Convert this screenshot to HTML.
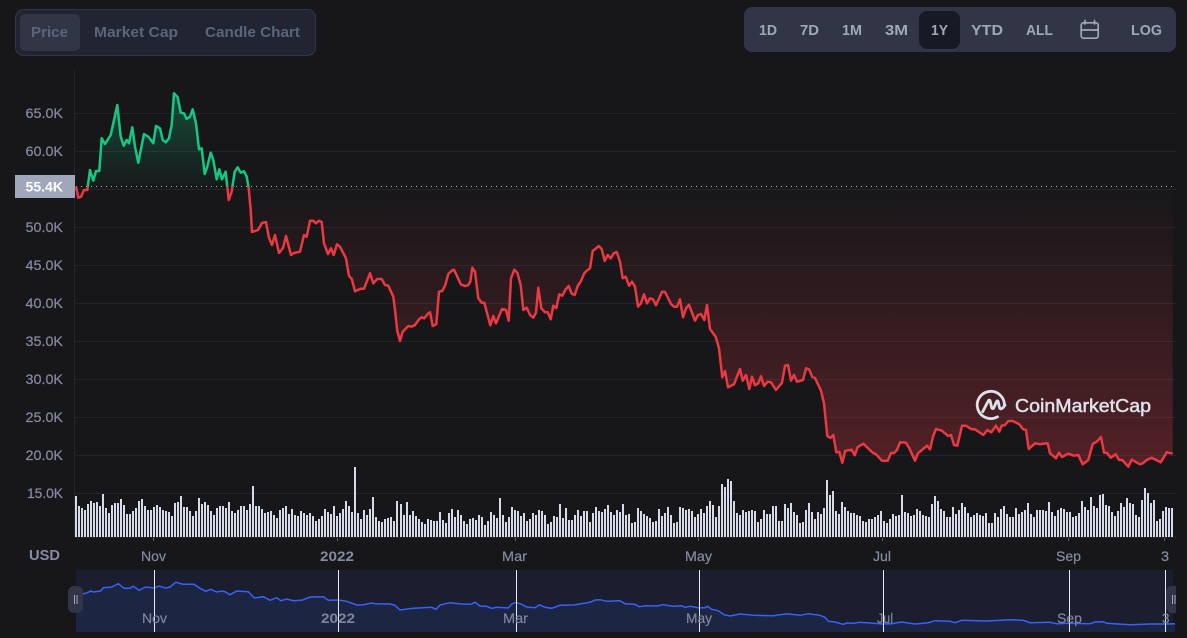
<!DOCTYPE html>
<html><head><meta charset="utf-8"><title>Chart</title>
<style>
html,body{margin:0;padding:0;background:#17171a;width:1187px;height:638px;overflow:hidden}
svg{display:block}
text{font-family:"Liberation Sans",sans-serif}
.t{font-size:15px;font-weight:700;fill:#58667e}
.b{font-size:15px;font-weight:700;fill:#a1a7bb}
.y{font-size:14px;fill:#858ca2;stroke:#858ca2;stroke-width:.2}
.x{font-size:14px;fill:#858ca2;stroke:#858ca2;stroke-width:.2}
.xb{font-size:14px;font-weight:700;fill:#858ca2}
.n{font-size:14px;fill:#7f869c;stroke:#7f869c;stroke-width:.2}
.nb{font-size:14px;font-weight:700;fill:#7f869c}
</style></head><body>
<svg width="1187" height="638" viewBox="0 0 1187 638" xmlns="http://www.w3.org/2000/svg">
<defs>
<linearGradient id="rg" gradientUnits="userSpaceOnUse" x1="0" y1="187" x2="0" y2="460"><stop offset="0" stop-color="#ea3943" stop-opacity="0"/><stop offset="1" stop-color="#ea3943" stop-opacity=".28"/></linearGradient>
<linearGradient id="gg" gradientUnits="userSpaceOnUse" x1="0" y1="93" x2="0" y2="187"><stop offset="0" stop-color="#16c784" stop-opacity=".3"/><stop offset="1" stop-color="#16c784" stop-opacity=".02"/></linearGradient>
<clipPath id="up"><rect x="70" y="60" width="1110" height="126.5"/></clipPath>
<clipPath id="dn"><rect x="70" y="186.5" width="1110" height="300"/></clipPath>
<clipPath id="navc"><rect x="60" y="570" width="1116" height="68"/></clipPath>
<path id="ln" d="M76 186.7L78.3 197.7 81 196.7 84 190 87.3 190 90 170 93.3 180.7 96 171 99.3 171 101.7 138.3 105 144 110.7 135 117.3 105 120.7 136.7 123.7 145.7 126.7 140 129 143.3 132.3 127.3 135 146.7 138.3 162.7 144 134 148.3 136.7 153.3 143.3 156 126 160 128.3 162.7 140 165.7 142.3 169 138.3 171.7 125 174 93.3 177.7 97.3 180.7 112.7 184 113.3 186.7 119 190 116.7 192.7 109.3 196 123.3 199 149.3 201.7 148.3 204.7 174 207.3 166.7 210.7 152.7 213.3 160 216.7 179.3 219.3 169.3 222 179.3 225.7 171.7 228.7 200 231.7 191.7 234.7 171.7 237.7 167.3 240.7 172.7 244 171.3 246.7 176.7 248.7 188.3 250.7 210 252 232 258 230 262 223 266 222 269 238 272 245 275 235 279 253 283 248 286 236 291 255 294 253 300 251.7 304 235 306.7 236.7 310 220.7 313.3 220.7 316 223.3 319 220.7 321.7 222 324 243.3 328 254 331 248.3 333.7 255 337 244.3 340 246.7 346 258.3 349 276 351.7 278.7 355 291.3 360.7 288.7 364 288.7 370 273.3 373.3 283.3 377.3 279 381.7 279 385 285 388.3 285.7 393.3 296.7 395 310 397.3 331 400 341 402.7 331.7 408.3 326 411.7 326.7 415 325 419.3 319 421.7 317.3 424.3 318.3 428.3 313.3 430 312.3 432.7 326 436.3 324.3 439 291.7 442.3 291 445.3 285 448.3 274 451.7 270.7 454 269.7 457.3 276.7 460.7 284.3 465 286 468.3 285 470.3 281.7 472.3 267.7 475 271.7 478.3 298.3 481.7 302.7 484.3 302.7 490.3 325.3 493.3 316 496 323.3 502 309 506 310 508.7 320.7 511 278.3 514.3 269.7 517.3 272.7 520.7 285 523.3 310 526.7 307.7 530 315 533.3 317.7 536 312.7 538.3 287.7 541.3 308.3 545 312.3 547.7 312.3 550.7 319.3 553.3 305.7 556.3 308 559.3 294.3 562.3 295.7 565.7 289.3 568.7 286 571.7 293.7 574.7 295 577.7 286 581 281 584.3 273.3 586.7 270.7 590 268.3 592.7 251 596 248.3 598.7 246 601.7 249 604.7 261 607.7 255 610.7 258.3 613.7 253.3 616.7 252 620 261.7 622.7 278.3 625.7 276.7 629 285.7 632 281.7 635 286.7 638 306.7 641 303.3 644 294.3 647 303.3 650 298.3 653 299.3 656 305.3 662 291.7 665 292 671 304 674 306.7 677 306.7 680 299.3 683 317.3 686 308.3 689 304.7 695 320.7 698 315 701 314 704.3 320 707 305 710 329 715.7 336.7 719 348.3 722.3 377.3 725 371 728 387.3 734 384.3 740 369 742.7 380.7 746 375 749.3 389 752 376.7 755 385.3 758.3 383.3 761 376.3 764 386 767.7 381.7 771 382.3 776 390 782 382.7 785 365.7 788 365 791 380.7 794 375 797 381.7 803 380 806 368.3 809.3 369.7 812.3 377 815 378 821 390.7 824 403.3 827.3 436 830.3 438 833.3 435 836.3 452.3 839.3 452 842.3 462.7 845.3 450.7 851.7 449.7 854.7 455.3 857.7 447 863.3 443.7 872.7 452.7 876 454.3 882 460.7 887.7 460.7 891 453 894 453 897 450 900 442.3 906 442.7 909.3 448.3 915 460.7 918 453.3 927 445.7 930 449.3 933 436.7 936 429 942 430.7 948 436 951 435 954 445 957.3 445.7 962 425.7 966 425.7 971.7 429.3 975 429.3 983.3 435 987.3 430 991.3 432.3 996 425.7 999.3 431.7 1001.7 425.7 1005 425 1008.3 421 1012.7 421 1019.3 424.3 1023.3 429.3 1026 430 1028.7 449 1035 443.3 1040 444.3 1047.7 443.3 1050 453.3 1056 458.3 1059 452.7 1062 457 1068.3 453.7 1074 455.7 1078.3 455 1082.7 464.3 1088.3 460 1092.7 444 1096.7 441.7 1101 437 1104 452.7 1106.7 452.7 1110.7 457.7 1115.7 454.3 1119 460 1122.3 460 1128.3 466.7 1131.7 459.7 1140 464.3 1142.7 463.3 1146.7 460 1151.7 457.7 1160.7 462.3 1166.7 452.3 1172.7 453.7"/>
<path id="ar" d="M76 186.7L78.3 197.7 81 196.7 84 190 87.3 190 90 170 93.3 180.7 96 171 99.3 171 101.7 138.3 105 144 110.7 135 117.3 105 120.7 136.7 123.7 145.7 126.7 140 129 143.3 132.3 127.3 135 146.7 138.3 162.7 144 134 148.3 136.7 153.3 143.3 156 126 160 128.3 162.7 140 165.7 142.3 169 138.3 171.7 125 174 93.3 177.7 97.3 180.7 112.7 184 113.3 186.7 119 190 116.7 192.7 109.3 196 123.3 199 149.3 201.7 148.3 204.7 174 207.3 166.7 210.7 152.7 213.3 160 216.7 179.3 219.3 169.3 222 179.3 225.7 171.7 228.7 200 231.7 191.7 234.7 171.7 237.7 167.3 240.7 172.7 244 171.3 246.7 176.7 248.7 188.3 250.7 210 252 232 258 230 262 223 266 222 269 238 272 245 275 235 279 253 283 248 286 236 291 255 294 253 300 251.7 304 235 306.7 236.7 310 220.7 313.3 220.7 316 223.3 319 220.7 321.7 222 324 243.3 328 254 331 248.3 333.7 255 337 244.3 340 246.7 346 258.3 349 276 351.7 278.7 355 291.3 360.7 288.7 364 288.7 370 273.3 373.3 283.3 377.3 279 381.7 279 385 285 388.3 285.7 393.3 296.7 395 310 397.3 331 400 341 402.7 331.7 408.3 326 411.7 326.7 415 325 419.3 319 421.7 317.3 424.3 318.3 428.3 313.3 430 312.3 432.7 326 436.3 324.3 439 291.7 442.3 291 445.3 285 448.3 274 451.7 270.7 454 269.7 457.3 276.7 460.7 284.3 465 286 468.3 285 470.3 281.7 472.3 267.7 475 271.7 478.3 298.3 481.7 302.7 484.3 302.7 490.3 325.3 493.3 316 496 323.3 502 309 506 310 508.7 320.7 511 278.3 514.3 269.7 517.3 272.7 520.7 285 523.3 310 526.7 307.7 530 315 533.3 317.7 536 312.7 538.3 287.7 541.3 308.3 545 312.3 547.7 312.3 550.7 319.3 553.3 305.7 556.3 308 559.3 294.3 562.3 295.7 565.7 289.3 568.7 286 571.7 293.7 574.7 295 577.7 286 581 281 584.3 273.3 586.7 270.7 590 268.3 592.7 251 596 248.3 598.7 246 601.7 249 604.7 261 607.7 255 610.7 258.3 613.7 253.3 616.7 252 620 261.7 622.7 278.3 625.7 276.7 629 285.7 632 281.7 635 286.7 638 306.7 641 303.3 644 294.3 647 303.3 650 298.3 653 299.3 656 305.3 662 291.7 665 292 671 304 674 306.7 677 306.7 680 299.3 683 317.3 686 308.3 689 304.7 695 320.7 698 315 701 314 704.3 320 707 305 710 329 715.7 336.7 719 348.3 722.3 377.3 725 371 728 387.3 734 384.3 740 369 742.7 380.7 746 375 749.3 389 752 376.7 755 385.3 758.3 383.3 761 376.3 764 386 767.7 381.7 771 382.3 776 390 782 382.7 785 365.7 788 365 791 380.7 794 375 797 381.7 803 380 806 368.3 809.3 369.7 812.3 377 815 378 821 390.7 824 403.3 827.3 436 830.3 438 833.3 435 836.3 452.3 839.3 452 842.3 462.7 845.3 450.7 851.7 449.7 854.7 455.3 857.7 447 863.3 443.7 872.7 452.7 876 454.3 882 460.7 887.7 460.7 891 453 894 453 897 450 900 442.3 906 442.7 909.3 448.3 915 460.7 918 453.3 927 445.7 930 449.3 933 436.7 936 429 942 430.7 948 436 951 435 954 445 957.3 445.7 962 425.7 966 425.7 971.7 429.3 975 429.3 983.3 435 987.3 430 991.3 432.3 996 425.7 999.3 431.7 1001.7 425.7 1005 425 1008.3 421 1012.7 421 1019.3 424.3 1023.3 429.3 1026 430 1028.7 449 1035 443.3 1040 444.3 1047.7 443.3 1050 453.3 1056 458.3 1059 452.7 1062 457 1068.3 453.7 1074 455.7 1078.3 455 1082.7 464.3 1088.3 460 1092.7 444 1096.7 441.7 1101 437 1104 452.7 1106.7 452.7 1110.7 457.7 1115.7 454.3 1119 460 1122.3 460 1128.3 466.7 1131.7 459.7 1140 464.3 1142.7 463.3 1146.7 460 1151.7 457.7 1160.7 462.3 1166.7 452.3 1172.7 453.7V186.5H76Z"/>
</defs>

<!-- tabs -->
<rect x="15.5" y="9.5" width="300" height="46" rx="8" fill="#222531" stroke="#323546"/>
<rect x="20" y="14" width="60" height="37" rx="6" fill="#323546"/>
<text class="t" x="31" y="37" textLength="37" lengthAdjust="spacingAndGlyphs">Price</text>
<text class="t" x="94" y="37" textLength="84" lengthAdjust="spacingAndGlyphs">Market Cap</text>
<text class="t" x="205" y="37" textLength="95" lengthAdjust="spacingAndGlyphs">Candle Chart</text>

<!-- range bar -->
<rect x="744" y="7" width="432" height="45" rx="8" fill="#323546"/>
<rect x="919" y="11" width="41" height="38" rx="8" fill="#171924"/>
<text class="b" x="759" y="35" textLength="18" lengthAdjust="spacingAndGlyphs">1D</text>
<text class="b" x="800" y="35" textLength="19" lengthAdjust="spacingAndGlyphs">7D</text>
<text class="b" x="842" y="35" textLength="20" lengthAdjust="spacingAndGlyphs">1M</text>
<text class="b" x="885" y="35" textLength="23" lengthAdjust="spacingAndGlyphs">3M</text>
<text class="b" x="931" y="35" textLength="17" lengthAdjust="spacingAndGlyphs">1Y</text>
<text class="b" x="971" y="35" textLength="32" lengthAdjust="spacingAndGlyphs">YTD</text>
<text class="b" x="1026" y="35" textLength="27" lengthAdjust="spacingAndGlyphs">ALL</text>
<text class="b" x="1131" y="35" textLength="31" lengthAdjust="spacingAndGlyphs">LOG</text>
<g fill="none" stroke="#a1a7bb" stroke-width="1.7" stroke-linecap="round"><rect x="1081.2" y="22.8" width="17" height="15.4" rx="2.5"/><path d="M1081.2 30H1098.2M1085 20.5V24M1094.5 20.5V24"/></g>

<!-- grid -->
<g stroke="#222531" stroke-width="1" fill="none">
<path d="M74.5 70V537.5M75 113.5H1176M75 151.5H1176M75 227.5H1176M75 265.5H1176M75 303.5H1176M75 341.5H1176M75 379.5H1176M75 417.5H1176M75 455.5H1176M75 493.5H1176M75 189.5H1176M75 537.5H1176"/>
</g>
<!-- y labels -->
<text class="y" x="25.5" y="118" textLength="37.5" lengthAdjust="spacingAndGlyphs">65.0K</text>
<text class="y" x="25.5" y="156" textLength="37.5" lengthAdjust="spacingAndGlyphs">60.0K</text>
<text class="y" x="25.5" y="232" textLength="37.5" lengthAdjust="spacingAndGlyphs">50.0K</text>
<text class="y" x="25.5" y="270" textLength="37.5" lengthAdjust="spacingAndGlyphs">45.0K</text>
<text class="y" x="25.5" y="308" textLength="37.5" lengthAdjust="spacingAndGlyphs">40.0K</text>
<text class="y" x="25.5" y="346" textLength="37.5" lengthAdjust="spacingAndGlyphs">35.0K</text>
<text class="y" x="25.5" y="384" textLength="37.5" lengthAdjust="spacingAndGlyphs">30.0K</text>
<text class="y" x="25.5" y="422" textLength="37.5" lengthAdjust="spacingAndGlyphs">25.0K</text>
<text class="y" x="25.5" y="460" textLength="37.5" lengthAdjust="spacingAndGlyphs">20.0K</text>
<text class="y" x="27" y="498" textLength="36" lengthAdjust="spacingAndGlyphs">15.0K</text>
<rect x="15" y="175" width="60" height="23" fill="#a1a7bb"/>
<text x="25.5" y="191.5" font-size="14" font-weight="700" fill="#fff" textLength="37.5" lengthAdjust="spacingAndGlyphs">55.4K</text>

<!-- areas + line -->
<use href="#ar" fill="url(#rg)" clip-path="url(#dn)"/>
<use href="#ar" fill="url(#gg)" clip-path="url(#up)"/>
<path d="M76 186.5H1176" stroke="#cfd3dc" stroke-width="1" stroke-dasharray="1 4" fill="none" opacity=".85"/>
<use href="#ln" fill="none" stroke="#ea3943" stroke-width="2.5" stroke-linejoin="round" clip-path="url(#dn)"/>
<use href="#ln" fill="none" stroke="#16c784" stroke-width="2.5" stroke-linejoin="round" clip-path="url(#up)"/>

<!-- volume -->
<g shape-rendering="crispEdges">
<path fill="none" stroke="#d5dbe8" stroke-width="2" d="M76 537v-41m3 41v-31m3 31v-29m3 29v-27m3 27v-33m3 33v-36m3 36v-34m3 34v-35m3 35v-31m3 31v-43m3 43v-29m3 29v-24m3 24v-32m3 32v-34m3 34v-34m3 34v-38m3 38v-32m3 32v-23m3 23v-23m3 23v-26m3 26v-29m3 29v-36m3 36v-38m3 38v-31m3 31v-27m3 27v-27m3 27v-30m3 30v-32m3 32v-30m3 30v-27m3 27v-26m3 26v-25m3 25v-21m3 21v-34m3 34v-35m3 35v-41m3 41v-30m3 30v-30m3 30v-26m3 26v-21m3 21v-26m3 26v-39m3 39v-33m3 33v-35m3 35v-32m3 32v-26m3 26v-22m3 22v-29m3 29v-31m3 31v-31m3 31v-29m3 29v-35m3 35v-26m3 26v-24m3 24v-27m3 27v-31m3 31v-31m3 31v-27m3 27v-33m3 33v-51m3 51v-31m3 31v-31m3 31v-28m3 28v-24m3 24v-25m3 25v-26m3 26v-22m3 22v-19m3 19v-27m3 27v-29m3 29v-31m3 31v-23m3 23v-28m3 28v-22m3 22v-21m3 21v-26m3 26v-24m3 24v-22m3 22v-24m3 24v-21m3 21v-16m3 16v-18m3 18v-21m3 21v-28m3 28v-25m3 25v-23m3 23v-31m3 31v-21m3 21v-24m3 24v-28m3 28v-36m3 36v-31m3 31v-25m3 25v-70m3 70v-24m3 24v-18m3 18v-27m3 27v-22m3 22v-28m3 28v-40m3 40v-20m3 20v-16m3 16v-15m3 15v-18m3 18v-19m3 19v-20m3 20v-16m3 16v-36"/>
<path fill="none" stroke="#d5dbe8" stroke-width="2" d="M401 537v-33m3 33v-22m3 22v-35m3 35v-22m3 22v-26m3 26v-21m3 21v-18m3 18v-15m3 15v-13m3 13v-18m3 18v-17m3 17v-16m3 16v-16m3 16v-25m3 25v-17m3 17v-14m3 14v-24m3 24v-28m3 28v-20m3 20v-27m3 27v-22m3 22v-16m3 16v-13m3 13v-18m3 18v-19m3 19v-17m3 17v-22m3 22v-20m3 20v-12m3 12v-16m3 16v-25m3 25v-22m3 22v-19m3 19v-39m3 39v-22m3 22v-15m3 15v-20m3 20v-30m3 30v-27m3 27v-26m3 26v-21m3 21v-24m3 24v-16m3 16v-18m3 18v-24m3 24v-22m3 22v-27m3 27v-26m3 26v-22m3 22v-13m3 13v-15m3 15v-21m3 21v-20m3 20v-33m3 33v-19m3 19v-29m3 29v-17m3 17v-17m3 17v-22m3 22v-27m3 27v-21m3 21v-26m3 26v-26m3 26v-15m3 15v-24m3 24v-30m3 30v-26m3 26v-25m3 25v-28m3 28v-32m3 32v-25m3 25v-22m3 22v-27m3 27v-25m3 25v-33m3 33v-22m3 22v-23m3 23v-14m3 14v-15m3 15v-29m3 29v-26m3 26v-23m3 23v-21m3 21v-19m3 19v-15m3 15v-16m3 16v-28m3 28v-21m3 21v-24m3 24v-30m3 30v-22m3 22v-14m3 14v-15m3 15v-30m3 30v-29m3 29v-27m3 27v-28m3 28v-26m3 26v-20m3 20v-23m3 23v-28m3 28v-24m3 24v-31m3 31v-36m3 36v-32m3 32v-20m3 20v-31m3 31v-53m3 53v-50m3 50v-58m3 58v-56m3 56v-36m3 36v-24m3 24v-22m3 22v-27m3 27v-25m3 25v-26m3 26v-27m3 27v-26m3 26v-15m3 15v-18m3 18v-27m3 27v-23m3 23v-23m3 23v-31m3 31v-31m3 31v-16m3 16v-16m3 16v-33m3 33v-29m3 29v-34m3 34v-25m3 25v-22m3 22v-14"/>
<path fill="none" stroke="#d5dbe8" stroke-width="2" d="M803 537v-15m3 15v-27m3 27v-34m3 34v-25m3 25v-18m3 18v-25m3 25v-23m3 23v-29m3 29v-57m3 57v-42m3 42v-46m3 46v-26m3 26v-23m3 23v-35m3 35v-30m3 30v-26m3 26v-24m3 24v-24m3 24v-22m3 22v-21m3 21v-16m3 16v-15m3 15v-18m3 18v-18m3 18v-20m3 20v-22m3 22v-26m3 26v-16m3 16v-14m3 14v-18m3 18v-23m3 23v-21m3 21v-22m3 22v-42m3 42v-25m3 25v-24m3 24v-21m3 21v-22m3 22v-28m3 28v-26m3 26v-22m3 22v-21m3 21v-20m3 20v-33m3 33v-41m3 41v-36m3 36v-28m3 28v-26m3 26v-20m3 20v-20m3 20v-30m3 30v-23m3 23v-27m3 27v-34m3 34v-30m3 30v-24m3 24v-20m3 20v-22m3 22v-24m3 24v-22m3 22v-21m3 21v-24m3 24v-14m3 14v-14m3 14v-24m3 24v-20m3 20v-28m3 28v-31m3 31v-23m3 23v-20m3 20v-20m3 20v-29m3 29v-23m3 23v-25m3 25v-27m3 27v-34m3 34v-23m3 23v-20m3 20v-27m3 27v-27m3 27v-27m3 27v-26m3 26v-35m3 35v-25m3 25v-21m3 21v-27m3 27v-29m3 29v-28m3 28v-25m3 25v-25m3 25v-20m3 20v-21m3 21v-24m3 24v-36m3 36v-30m3 30v-27m3 27v-40m3 40v-31m3 31v-29m3 29v-42m3 42v-43m3 43v-32m3 32v-31m3 31v-25m3 25v-21m3 21v-26m3 26v-34m3 34v-30m3 30v-39m3 39v-34m3 34v-33m3 33v-22m3 22v-20m3 20v-37m3 37v-49m3 49v-44m3 44v-34m3 34v-37m3 37v-16m3 16v-18m3 18v-26m3 26v-30m3 30v-29m3 29v-29"/>
</g>
<path d="M153.5 538v3M337.5 538v3M515.5 538v3M698.5 538v3M882.5 538v3M1068.5 538v3M1164.5 538v3" stroke="#555a68" stroke-width="1"/>

<!-- logo -->
<g fill="none" stroke="#dde1ea" stroke-width="2.8" stroke-linecap="round" stroke-linejoin="round">
<path d="M1004.4 405A13.6 13.6 0 1 0 997.5 416.8"/>
<path d="M982.7 411.7L988.3 400.9C989 399.5 990 400 990.3 401.5L991.6 407.5C992 409 993.4 409 994 407.5L996.3 402C997 400.4 998 400.6 998.3 402L999.5 407.5C1000 409.5 1002 409.8 1005 405"/>
</g>
<text x="1015" y="412" font-size="18.5" fill="#dde1ea" stroke="#dde1ea" stroke-width=".5" textLength="136" lengthAdjust="spacingAndGlyphs">CoinMarketCap</text>

<!-- x labels -->
<text x="29" y="560" font-size="14.5" font-weight="700" fill="#858ca2" textLength="31" lengthAdjust="spacingAndGlyphs">USD</text>
<text class="x" x="141" y="561" textLength="25" lengthAdjust="spacingAndGlyphs">Nov</text>
<text class="xb" x="320" y="561" textLength="34" lengthAdjust="spacingAndGlyphs">2022</text>
<text class="x" x="502" y="561" textLength="25" lengthAdjust="spacingAndGlyphs">Mar</text>
<text class="x" x="685" y="561" textLength="27" lengthAdjust="spacingAndGlyphs">May</text>
<text class="x" x="873" y="561" textLength="18" lengthAdjust="spacingAndGlyphs">Jul</text>
<text class="x" x="1056" y="561" textLength="25" lengthAdjust="spacingAndGlyphs">Sep</text>
<text class="x" x="1161" y="561" textLength="8" lengthAdjust="spacingAndGlyphs">3</text>

<!-- navigator -->
<rect x="76" y="570" width="1097" height="62" fill="#1a1e2e"/>
<path fill="#1c2643" d="M76 594L83 594 87.3 592.7 90.7 591 93.3 592 100.7 591 103.3 587.7 111.7 587 118.3 583.7 124 588.3 130 588.3 133.3 586.3 139 590.3 145.7 587 154 588 159 586 165.7 588 170 587 175.7 582.3 183.3 584.3 194 584.3 200 588.3 205.7 591.3 210.7 589.3 216.7 592 221.7 591 225 591.7 230 594.7 236.7 591 248.3 591.7 254.3 598 263.3 596.7 270 600.3 276.7 597.7 280.7 600.7 286.7 599 293.3 600.7 301.7 600.3 310 597 323.3 596.7 328.3 600.3 338.3 600 346.7 601.3 356.7 605 363.3 604.7 371.7 603 375 603.7 390 604 395 605.3 400 610 413.3 608.3 431.7 607.3 436 609.3 440 605 450 602.7 461.7 604 470.7 604.3 475 602.3 480 606 486.7 606.3 491.7 608.3 496.7 607.3 508.3 608 511.7 604 516 602.3 521.7 604.3 526.7 607 535 607.7 539.3 604.7 545 607.3 551.7 608.3 560 605.3 573.3 605 590 602.3 595 600 600 599.7 606.7 601.3 620 600.7 625 603.7 635 604.3 639.3 606.7 645 605.7 656.7 606 663.3 604.7 673.3 606.3 681.7 605.7 685 607.3 690 606.3 698.3 607.7 705 607.7 707.7 606.3 711.7 609.3 718.3 610.7 724 614.7 730 616 740 614 753.3 615.3 773.3 615.7 786.7 613.7 800 615.3 808.3 613.7 820 615.3 825 617.3 828.3 621.3 835 622 843.3 624.3 846.7 623 853.3 623.3 860 622.3 866.7 622.7 883.3 624 891.7 623.7 901.7 622 915 624 928.3 622.7 935 620.7 950 621.3 955 622.7 961.7 620.3 986.7 621 1010 619.7 1023.3 620.3 1030 622.7 1050 622.3 1056.7 623.7 1069.3 623.3 1090 623.7 1095 622 1103.3 621.7 1106.7 623.3 1130 624.7 1150 624 1166.7 624 1175 623.7V632H76Z"/>
<path fill="none" stroke="#3861fb" stroke-width="1.5" d="M83 594L87.3 592.7 90.7 591 93.3 592 100.7 591 103.3 587.7 111.7 587 118.3 583.7 124 588.3 130 588.3 133.3 586.3 139 590.3 145.7 587 154 588 159 586 165.7 588 170 587 175.7 582.3 183.3 584.3 194 584.3 200 588.3 205.7 591.3 210.7 589.3 216.7 592 221.7 591 225 591.7 230 594.7 236.7 591 248.3 591.7 254.3 598 263.3 596.7 270 600.3 276.7 597.7 280.7 600.7 286.7 599 293.3 600.7 301.7 600.3 310 597 323.3 596.7 328.3 600.3 338.3 600 346.7 601.3 356.7 605 363.3 604.7 371.7 603 375 603.7 390 604 395 605.3 400 610 413.3 608.3 431.7 607.3 436 609.3 440 605 450 602.7 461.7 604 470.7 604.3 475 602.3 480 606 486.7 606.3 491.7 608.3 496.7 607.3 508.3 608 511.7 604 516 602.3 521.7 604.3 526.7 607 535 607.7 539.3 604.7 545 607.3 551.7 608.3 560 605.3 573.3 605 590 602.3 595 600 600 599.7 606.7 601.3 620 600.7 625 603.7 635 604.3 639.3 606.7 645 605.7 656.7 606 663.3 604.7 673.3 606.3 681.7 605.7 685 607.3 690 606.3 698.3 607.7 705 607.7 707.7 606.3 711.7 609.3 718.3 610.7 724 614.7 730 616 740 614 753.3 615.3 773.3 615.7 786.7 613.7 800 615.3 808.3 613.7 820 615.3 825 617.3 828.3 621.3 835 622 843.3 624.3 846.7 623 853.3 623.3 860 622.3 866.7 622.7 883.3 624 891.7 623.7 901.7 622 915 624 928.3 622.7 935 620.7 950 621.3 955 622.7 961.7 620.3 986.7 621 1010 619.7 1023.3 620.3 1030 622.7 1050 622.3 1056.7 623.7 1069.3 623.3 1090 623.7 1095 622 1103.3 621.7 1106.7 623.3 1130 624.7 1150 624 1166.7 624 1175 623.7"/>
<path d="M154.5 570V632M338.5 570V632M516.5 570V632M699.5 570V632M883.5 570V632M1069.5 570V632M1165.5 570V632" stroke="#e8ebf2" stroke-width="1"/>
<text class="n" x="142" y="623" textLength="25" lengthAdjust="spacingAndGlyphs">Nov</text>
<text class="nb" x="321" y="623" textLength="34" lengthAdjust="spacingAndGlyphs">2022</text>
<text class="n" x="503" y="623" textLength="25" lengthAdjust="spacingAndGlyphs">Mar</text>
<text class="n" x="686" y="623" textLength="26" lengthAdjust="spacingAndGlyphs">May</text>
<text class="n" x="877" y="623" textLength="16" lengthAdjust="spacingAndGlyphs">Jul</text>
<text class="n" x="1057" y="623" textLength="25" lengthAdjust="spacingAndGlyphs">Sep</text>
<text class="n" x="1162" y="623" textLength="7.5" lengthAdjust="spacingAndGlyphs">3</text>
<rect x="68" y="586" width="15" height="27" rx="6" fill="#323546"/>
<path d="M74.5 595V604M77 595V604" stroke="#a1a7bb" stroke-width="1"/>
<g clip-path="url(#navc)"><rect x="1166" y="586" width="15" height="27" rx="6" fill="#323546"/><path d="M1172.5 595V604M1175 595V604" stroke="#a1a7bb" stroke-width="1"/></g>
</svg>
</body></html>
